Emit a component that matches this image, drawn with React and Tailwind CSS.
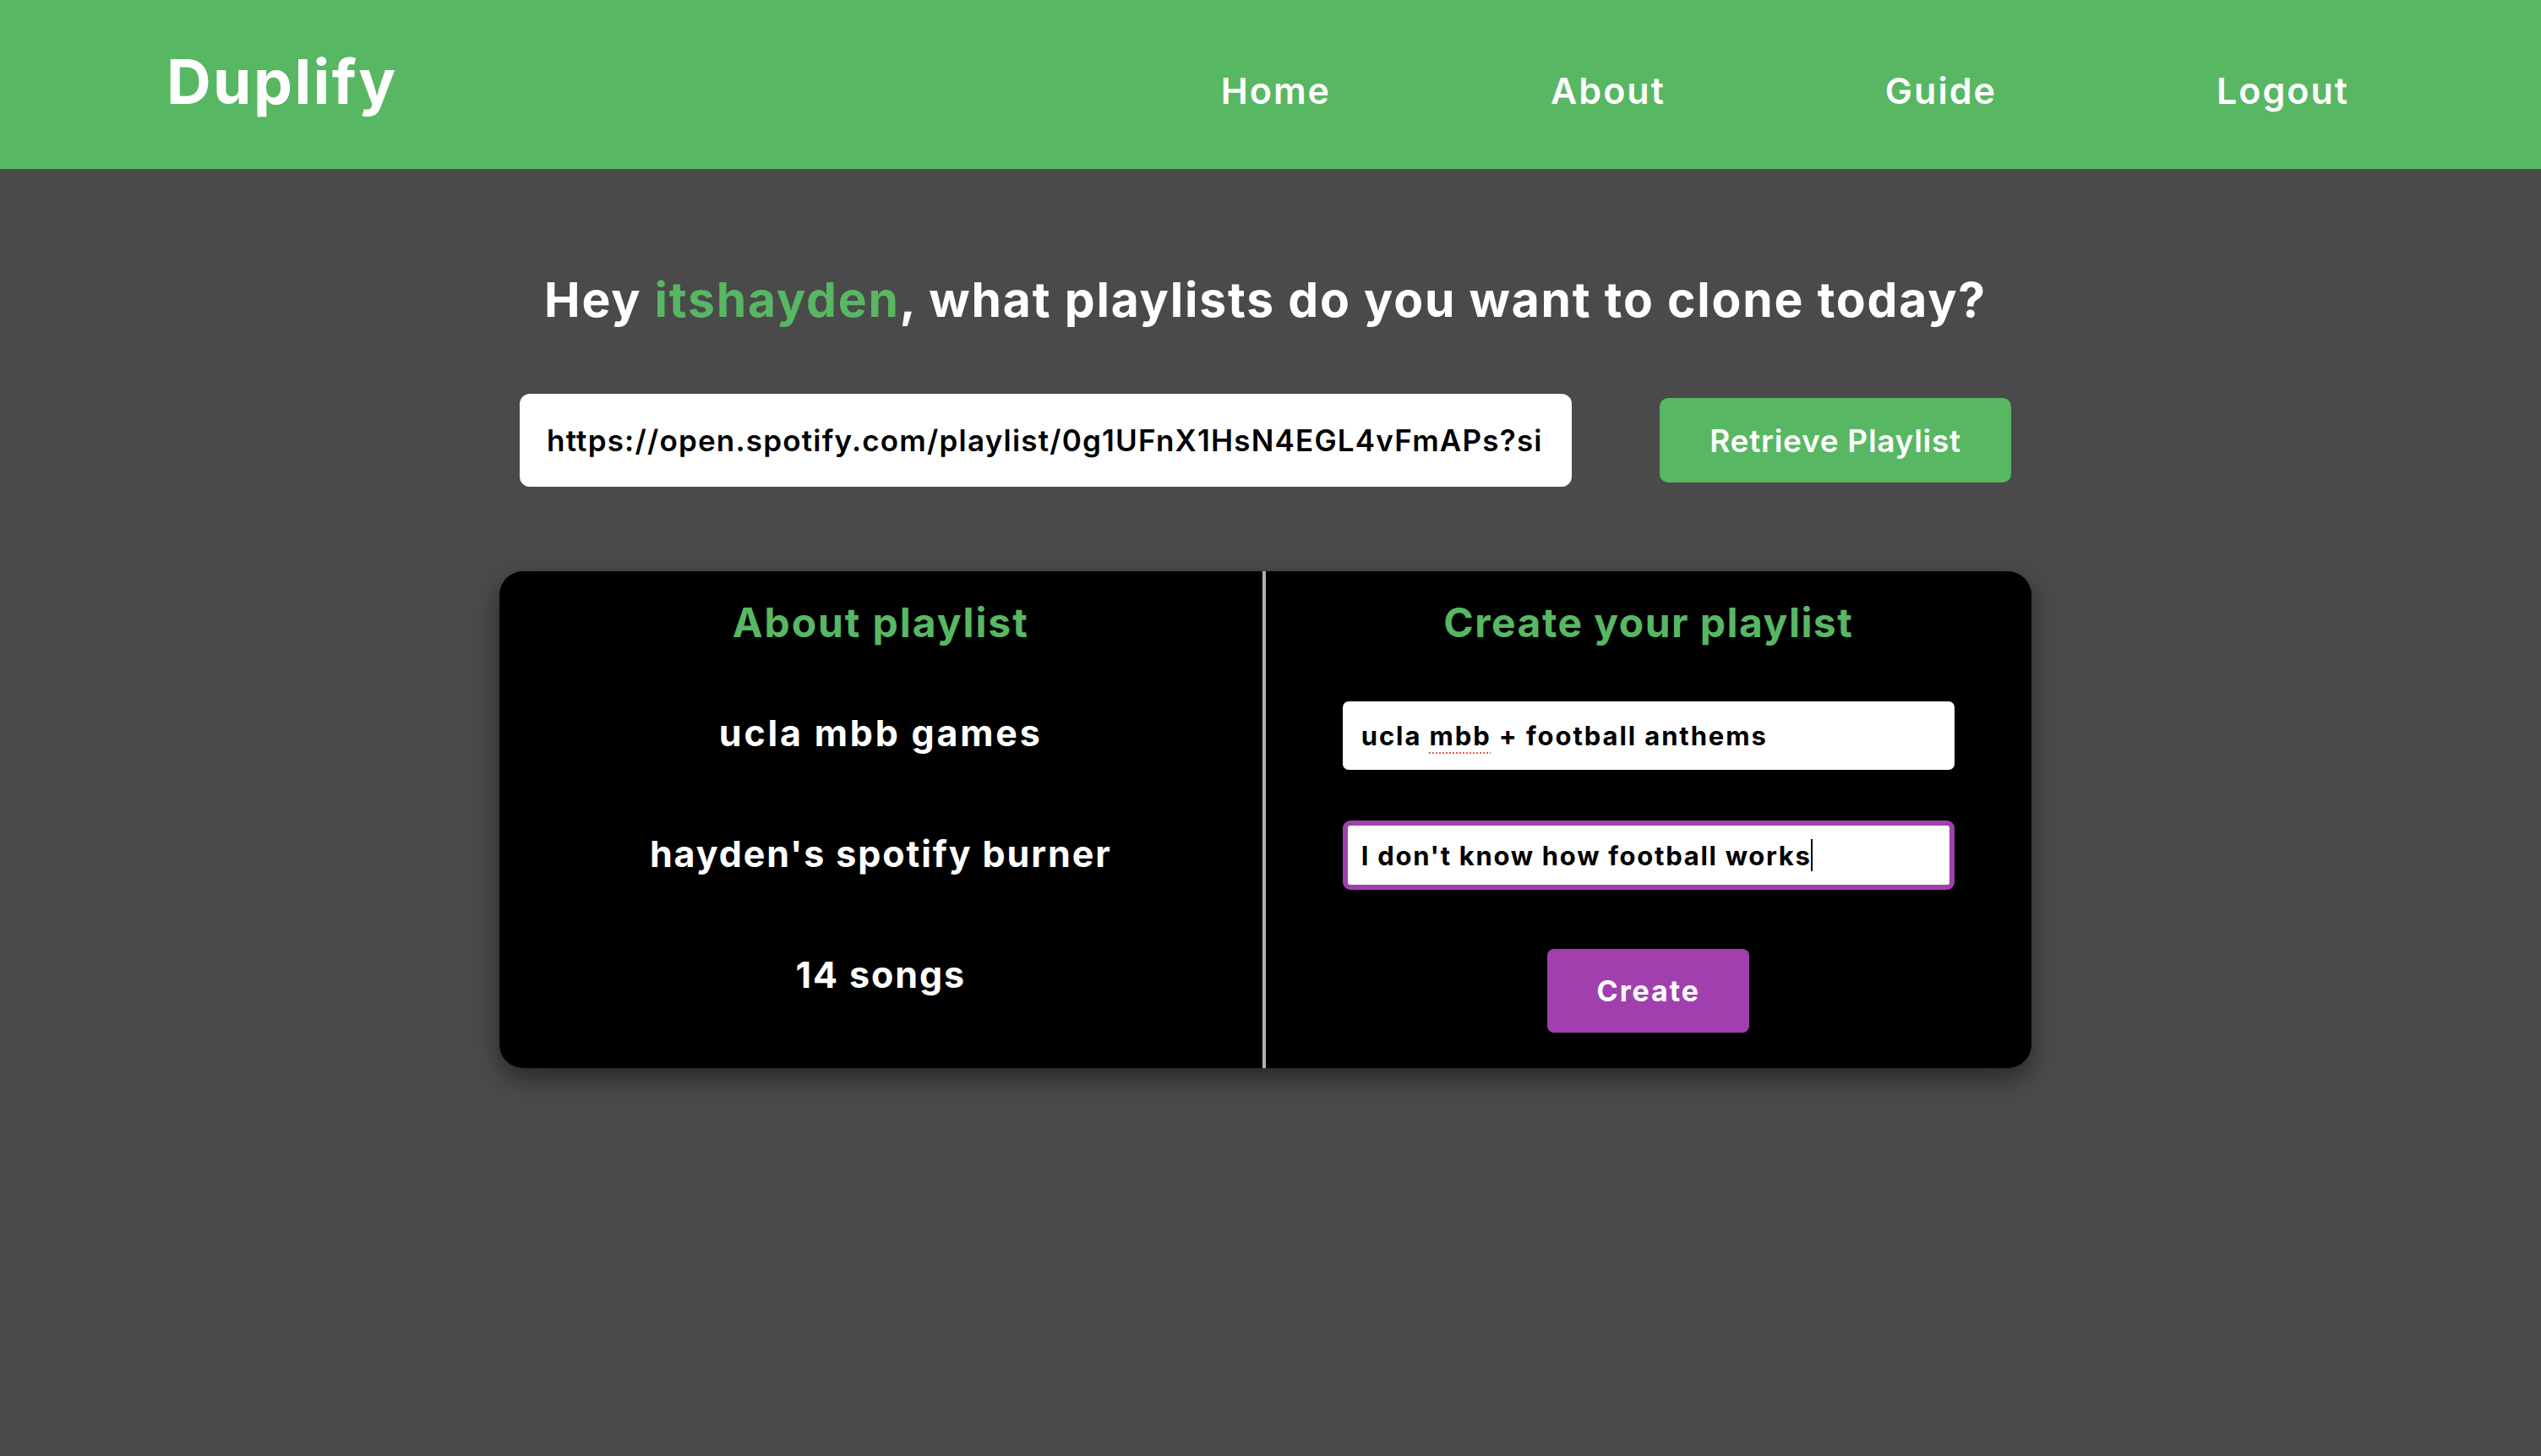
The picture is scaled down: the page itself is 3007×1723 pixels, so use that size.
export default function App() {
  const green = "text-[#58b762]";
  return (
    <div className="min-h-[1723px] bg-[#4a4a4a] font-['Inter',sans-serif]">
      <header className="h-[200px] bg-[#58b762] flex items-baseline pl-[197px] pr-[227px] pt-[60px]">
        <div className="text-[73px] font-bold leading-none tracking-[2.4px] text-white">Duplify</div>
        <nav className="ml-auto flex items-baseline gap-[260px] text-[43px] font-semibold leading-none tracking-[2px] text-white">
          <a href="#">Home</a>
          <a href="#">About</a>
          <a href="#">Guide</a>
          <a href="#">Logout</a>
        </nav>
      </header>
      <main className="flex flex-col items-center pr-[12px] pt-[126px] pb-[200px]">
        <h1 className="text-[57px] font-bold leading-none tracking-[1.8px] text-white whitespace-nowrap">
          Hey <span className={green}>itshayden</span>, what playlists do you want to clone today?
        </h1>
        <div className="mt-[83px] flex items-center gap-[104px]">
          <div className="w-[1245px] h-[110px] bg-white rounded-[12px] pl-[32px] flex items-center overflow-hidden whitespace-nowrap text-[35px] font-semibold leading-none tracking-[1.2px] text-black">
            https://open.spotify.com/playlist/0g1UFnX1HsN4EGL4vFmAPs?si
          </div>
          <button className="w-[416px] h-[100px] bg-[#58b762] rounded-[10px] text-white text-[37px] font-semibold leading-none tracking-[0.7px]">
            Retrieve Playlist
          </button>
        </div>
        <div className="mt-[100px] w-[1813px] grid grid-cols-2 bg-black rounded-[28px] shadow-[0_12px_28px_rgba(0,0,0,0.45)]">
          <div className="flex flex-col items-center border-r-4 border-[#b0b0b0] pt-[37px] pb-[89px]">
            <h2 className={`text-[48px] font-bold leading-none tracking-[1.9px] ${green}`}>About playlist</h2>
            <div className="mt-[85px] flex flex-col items-center gap-[100px] text-[43px] font-bold leading-none text-white">
              <div className="tracking-[2.8px]">ucla mbb games</div>
              <div className="tracking-[1.9px]">hayden's spotify burner</div>
              <div className="tracking-[1.9px]">14 songs</div>
            </div>
          </div>
          <div className="flex flex-col items-center pt-[37px] pb-[41px]">
            <h2 className={`text-[48px] font-bold leading-none tracking-[1.45px] ${green}`}>Create your playlist</h2>
            <div className="mt-[69px] w-[724px] h-[81px] bg-white rounded-[7px] pl-[22px] flex items-center text-[31px] font-bold leading-none tracking-[1.9px] text-black whitespace-nowrap">
              ucla&nbsp;<span className="underline decoration-dotted decoration-[#e0604f] decoration-2 underline-offset-[8px]">mbb</span>&nbsp;+ football anthems
            </div>
            <div className="mt-[60px] w-[724px] h-[82px] bg-white rounded-[9px] border-[6px] border-[#a23fae] pl-[16px] flex items-center text-[31px] font-bold leading-none tracking-[1.7px] text-black whitespace-nowrap">
              I don't know how football works
              <span className="-ml-[1px] w-[2px] h-[38px] bg-black"></span>
            </div>
            <button className="mt-[70px] w-[239px] h-[99px] bg-[#a23fae] rounded-[8px] text-white text-[34px] font-bold leading-none tracking-[1.9px]">
              Create
            </button>
          </div>
        </div>
      </main>
    </div>
  );
}
